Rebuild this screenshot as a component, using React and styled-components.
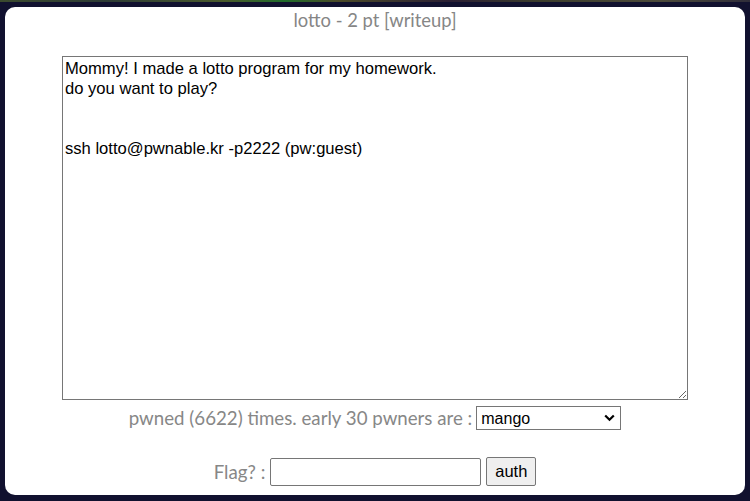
import React from 'react'
import styled, { createGlobalStyle } from 'styled-components'

const GlobalStyle = createGlobalStyle`
  html, body {
    margin: 0;
    padding: 0;
    height: 100%;
  }
  body {
    background:
      linear-gradient(90deg, #3b4a2e 0%, #2d3b35 14%, #4a5a2c 30%, #1f6b2a 38%, #4b4a28 45%, #2a1f33 60%, #3c3d2c 72%, #4c4a3a 88%, #2f2d3a 100%) top / 100% 2px no-repeat,
      #11112f;
    font-family: Lato, 'Open Sans', sans-serif;
  }
`

const Frame = styled.div`
  box-sizing: border-box;
  width: 750px;
  height: 501px;
  padding: 7px 5px 6px 5px;
  display: flex;
`

const Panel = styled.div`
  flex: 1;
  background: #fff;
  border-radius: 10px;
  display: flex;
  flex-direction: column;
  align-items: center;
`

const Title = styled.div`
  margin-top: 2px;
  font-size: 18.4px;
  line-height: 22px;
  color: #868686;
`

const Description = styled.textarea`
  box-sizing: border-box;
  margin-top: 25px;
  width: 626px;
  height: 344px;
  padding: 2px;
  border: 1px solid #767676;
  border-radius: 0;
  font-family: 'Liberation Sans', Arial, sans-serif;
  font-size: 16.6px;
  line-height: 20px;
  color: #000;
  background: #fff;
  resize: both;
  outline: none;
`

const Row = styled.div`
  display: flex;
  align-items: center;
  gap: ${(p) => p.$gap || 4}px;
  margin-top: ${(p) => p.$top}px;
  font-size: 18.7px;
  color: #878787;
`

const PickerWrap = styled.div`
  position: relative;
  display: flex;
`

const Picker = styled.select`
  box-sizing: border-box;
  width: 145px;
  height: 24px;
  padding: 0 4px;
  border: 1px solid #767676;
  border-radius: 0;
  background: #fff;
  font-family: 'Liberation Sans', Arial, sans-serif;
  font-size: 16px;
  color: #000;
  appearance: none;
  -webkit-appearance: none;
`

const Chevron = styled.svg`
  position: absolute;
  right: 6px;
  top: 8px;
  width: 11px;
  height: 8px;
  pointer-events: none;
`

const FlagInput = styled.input`
  box-sizing: border-box;
  width: 211px;
  height: 28px;
  padding: 1px 2px;
  border: 1px solid #767676;
  border-radius: 2px;
  background: #fff;
  font-family: 'Liberation Sans', Arial, sans-serif;
  font-size: 16px;
`

const AuthButton = styled.button`
  box-sizing: border-box;
  width: 50px;
  height: 29px;
  padding: 1px 6px;
  border: 1px solid #767676;
  border-radius: 2px;
  background: #efefef;
  font-family: 'Liberation Sans', Arial, sans-serif;
  font-size: 16.5px;
  color: #000;
`

const text = `Mommy! I made a lotto program for my homework.
do you want to play?


ssh lotto@pwnable.kr -p2222 (pw:guest)`

export default function App() {
  return (
    <>
      <GlobalStyle />
      <Frame>
        <Panel>
          <Title>lotto - 2 pt [writeup]</Title>
          <Description defaultValue={text} />
          <Row $top={6}>
            <span>pwned (6622) times. early 30 pwners are :</span>
            <PickerWrap>
              <Picker defaultValue="mango">
                <option value="mango">mango</option>
              </Picker>
              <Chevron viewBox="0 0 11 8">
                <path d="M1.2 1.5 L5.5 5.8 L9.8 1.5" fill="none" stroke="#000" strokeWidth="2.2" />
              </Chevron>
            </PickerWrap>
          </Row>
          <Row $top={27} $gap={5}>
            <span>Flag? :</span>
            <FlagInput type="text" />
            <AuthButton>auth</AuthButton>
          </Row>
        </Panel>
      </Frame>
    </>
  )
}
